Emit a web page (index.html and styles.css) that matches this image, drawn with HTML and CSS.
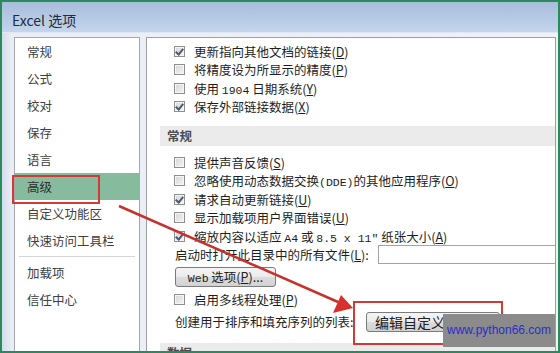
FILE: index.html
```html
<html>
<head>
    <title>Excel 选项</title>
    <link rel="stylesheet" href="styles.css">
</head>
<body>
<div class="window">
    <div class="titlebar">Excel 选项</div>
    <div class="client">
        <ul class="nav">
            <li>常规</li>
            <li>公式</li>
            <li>校对</li>
            <li>保存</li>
            <li>语言</li>
            <li class="active">高级</li>
            <li>自定义功能区</li>
            <li>快速访问工具栏</li>
            <li class="sep"></li>
            <li>加载项</li>
            <li>信任中心</li>
        </ul>
        <div class="main">
            <div class="row"><span class="box checked"></span><span>更新指向其他文档的链接(<u>D</u>)</span></div>
            <div class="row"><span class="box"></span><span>将精度设为所显示的精度(<u>P</u>)</span></div>
            <div class="row"><span class="box"></span><span>使用 <span class="mono">1904</span> 日期系统(<u>Y</u>)</span></div>
            <div class="row"><span class="box checked"></span><span>保存外部链接数据(<u>X</u>)</span></div>

            <div class="section">常规</div>
            <div class="row"><span class="box"></span><span>提供声音反馈(<u>S</u>)</span></div>
            <div class="row"><span class="box"></span><span>忽略使用动态数据交换<span class="mono">(DDE)</span>的其他应用程序(<u>O</u>)</span></div>
            <div class="row"><span class="box checked"></span><span>请求自动更新链接(<u>U</u>)</span></div>
            <div class="row"><span class="box"></span><span>显示加载项用户界面错误(<u>U</u>)</span></div>
            <div class="row"><span class="box checked"></span><span>缩放内容以适应 <span class="mono">A4</span> 或 <span class="mono">8.5 x 11"</span> 纸张大小(<u>A</u>)</span></div>
            <div class="row"><span class="label">启动时打开此目录中的所有文件(<u>L</u>):</span><span class="input"></span></div>
            <div class="btn web"><span class="mono">Web</span> 选项(<u>P</u>)...</div>
            <div class="row"><span class="box"></span><span>启用多线程处理(<u>P</u>)</span></div>
            <div class="row tall"><span class="label short">创建用于排序和填充序列的列表:</span><span class="btn edit">编辑自定义列表...</span></div>
            <div class="section">数据</div>
        </div>
    </div>

    <!-- annotations drawn over the screenshot -->
    <svg class="annot" width="560" height="353" viewBox="0 0 560 353">
        <rect x="13" y="176" width="86" height="27" fill="none" stroke="#d23a36" stroke-width="2"/>
        <rect x="354" y="302" width="148" height="42" fill="none" stroke="#d23a36" stroke-width="2"/>
        <line x1="119" y1="206" x2="338" y2="302" stroke="#c8322e" stroke-width="2.5"/>
        <polygon points="353,308 333,313 341,295" fill="#d8302c"/>
    </svg>
    <div class="watermark">www.python66.com</div>
</div>
</body>
</html>
```

FILE: styles.css
```css
body {
    margin: 0;
    font-family: "Noto Sans CJK SC", "Liberation Sans", sans-serif;
}
.window {
    position: relative;
    width: 560px;
    height: 353px;
    box-sizing: border-box;
    border: 2px solid #2a8a5e;
    overflow: hidden;
    background: linear-gradient(90deg, #d3ddec 0px, #e9eef6 10px, #eef1f6 100%);
}
.titlebar {
    height: 31px;
    box-sizing: border-box;
    padding: 5px 10px 0;
    line-height: 26px;
    font-size: 14px;
    color: #1e2c40;
    background: linear-gradient(#a7bddb, #c4d5ec);
    border-bottom: 1px solid #dfe7f2;
}
.client {
    display: flex;
    gap: 6px;
    padding: 4px 2px 0 12px;
    height: 330px;
}
.nav {
    list-style: none;
    margin: 0;
    padding: 0;
    width: 124px;
    background: #fff;
    border: 1px solid #a7a7a7;
    font-size: 12.5px;
    color: #404040;
}
.nav li {
    height: 27px;
    line-height: 27px;
    padding-left: 12px;
}
.nav li.active {
    background: #86bc9d;
    color: #2c2c2c;
}
.nav li.sep {
    height: 0;
    margin: 2px 4px 2px 4px;
    padding: 0;
    border-top: 1px solid #d6d6d6;
}
.main {
    flex: 1;
    background: #fff;
    border: 1px solid #a0a0a0;
    padding-top: 4px;
    font-size: 12.5px;
    color: #1e1e1e;
}
.row {
    display: flex;
    align-items: center;
    height: 18.5px;
    padding-left: 27px;
    white-space: pre;
}
.row.tall {
    height: 22px;
    margin-top: 2px;
}
.box {
    position: relative;
    width: 9px;
    height: 9px;
    margin-right: 9px;
    border: 1px solid #8e8f8f;
    background: linear-gradient(135deg, #d6d6d6, #f4f4f4);
    box-shadow: inset 0 0 0 1px #f6f6f6;
}
.box.checked::after {
    content: "";
    position: absolute;
    left: 2px;
    top: 0px;
    width: 3px;
    height: 6px;
    border-right: 2px solid #4b5a72;
    border-bottom: 2px solid #4b5a72;
    transform: rotate(40deg);
}
.mono {
    font-family: "Liberation Mono", monospace;
    font-size: 11.5px;
}
u {
    text-decoration: underline;
    text-underline-offset: 1px;
}
.section {
    height: 20px;
    line-height: 20px;
    margin: 10px 0 7px 13px;
    padding-left: 7px;
    background: #ebebeb;
    font-weight: bold;
    color: #4c4c4c;
}
.label {
    width: 203px;
    padding-left: 1px;
}
.label.short {
    width: 191px;
}
.input {
    flex: 1;
    height: 17px;
    border: 1px solid #a3a3a3;
    border-right: none;
    background: #fff;
}
.btn {
    box-sizing: border-box;
    height: 20px;
    line-height: 18px;
    border: 1px solid #7b7b7b;
    border-radius: 3px;
    background: linear-gradient(#f4f4f4 0%, #ebebeb 50%, #dcdcdc 51%, #d2d2d2 100%);
    text-align: center;
    color: #202020;
    white-space: nowrap;
}
.btn.web {
    width: 101px;
    margin: 3px 0 3px 28px;
    font-size: 12.5px;
}
.btn.edit {
    width: 134px;
    font-size: 14px;
    text-align: left;
    padding-left: 8px;
}
.annot {
    position: absolute;
    left: -2px;
    top: -2px;
}
.watermark {
    position: absolute;
    left: 441px;
    top: 312px;
    width: 112px;
    height: 33px;
    background: #8b8b8b;
    color: #2b2bd0;
    font-family: "Liberation Sans", sans-serif;
    font-size: 12px;
    line-height: 33px;
    text-align: center;
}
```
